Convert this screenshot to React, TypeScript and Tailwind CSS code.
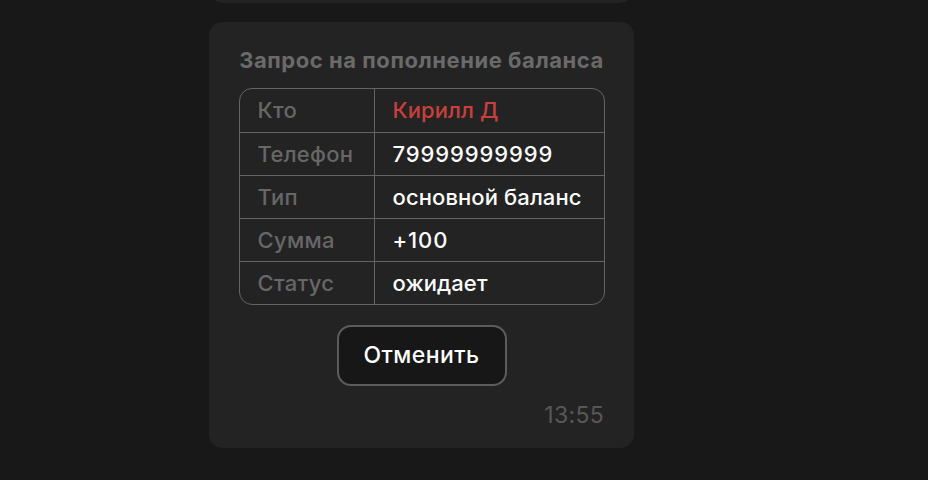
const rows: { k: string; v: string; red?: boolean; digits?: boolean }[] = [
  { k: 'Кто', v: 'Кирилл Д', red: true },
  { k: 'Телефон', v: '79999999999', digits: true },
  { k: 'Тип', v: 'основной баланс' },
  { k: 'Сумма', v: '+100', digits: true },
  { k: 'Статус', v: 'ожидает' },
];

export default function App() {
  return (
    <main
      className="min-h-[480px] w-full bg-[#181818] flex flex-col items-start pl-[209px] overflow-hidden"
      style={{ fontFamily: 'Inter, "Noto Sans", sans-serif' }}
    >
      <div className="w-[425px] h-[30px] -mt-[27px] rounded-[14px] bg-[#232323]" />
      <section className="mt-[19px] w-[425px] h-[426px] rounded-[14px] bg-[#232323] flex flex-col items-center pt-[24px]">
        <h2 className="text-[22px] leading-[28px] font-bold text-[#6a6a6a] tracking-[0.55px]">Запрос на пополнение баланса</h2>
        <div className="mt-[14px] w-[366px] border-[1.5px] border-[#646464] rounded-[13px] overflow-hidden">
          {rows.map((r, i) => (
            <div key={r.k} className={`flex h-[43px] ${i ? 'border-t-[1.5px] border-[#646464]' : ''}`}>
              <div className="w-[135px] shrink-0 border-r-[1.5px] border-[#646464] pl-[18px] flex items-center text-[22px] font-medium tracking-[0.3px] text-[#676767]">{r.k}</div>
              <div className={`pl-[18px] flex items-center text-[22px] font-medium ${r.digits ? 'tracking-[0.9px]' : 'tracking-[0.1px]'} ${r.red ? 'text-[#c8403c]' : 'text-white'}`}>{r.v}</div>
            </div>
          ))}
        </div>
        <button className="mt-[20px] w-[170px] h-[61px] rounded-[14px] border-2 border-[#5c5c5c] bg-[#171717] text-white text-[23px] font-medium tracking-[0.4px]">Отменить</button>
        <div className="self-end mr-[30px] mt-[15px] text-[23px] leading-[28px] text-[#575757] tracking-[0.3px]">13:55</div>
      </section>
    </main>
  );
}
